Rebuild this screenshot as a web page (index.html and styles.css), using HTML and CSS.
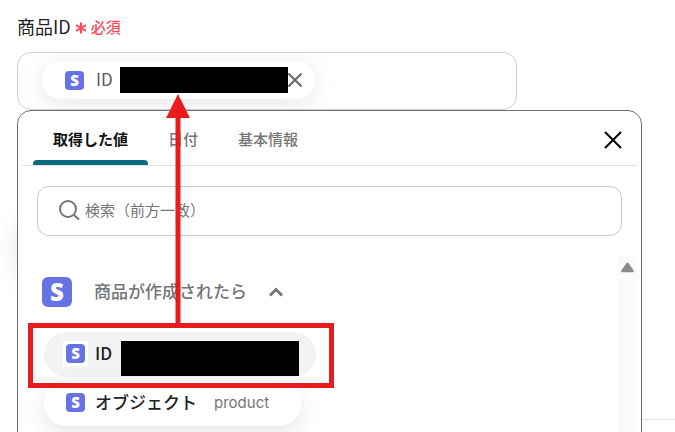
FILE: index.html
```
<!DOCTYPE html>
<html lang="ja">
<head>
  <meta charset="UTF-8">
  <title>商品ID</title>
  <meta name="viewport" content="width=device-width, initial-scale=1.0">
  <link rel="stylesheet" href="styles.css">
</head>
<body>
  <section class="form-section">
    <div class="label-row">
      <span class="label" id="product-label">商品ID</span>
      <svg class="asterisk" viewBox="0 0 12 12"><path d="M6 0.5v11M1 3.2l10 5.6M11 3.2L1 8.8"/></svg>
      <span class="required">必須</span>
    </div>

    <div class="picker">
      <div class="field" role="group" aria-labelledby="product-label">
        <div class="chip">
          <span class="logo">S</span>
          <span class="chip-name">ID</span>
          <span class="mask"></span>
          <button class="chip-remove" type="button" aria-label="削除">
            <svg viewBox="0 0 14 14"><path d="M0.5 0.5l13 13M13.5 0.5l-13 13"/></svg>
          </button>
        </div>
      </div>

      <!-- Value picker panel -->
      <div class="panel">
        <div class="tabs">
          <button class="tab active" type="button">取得した値</button>
          <button class="tab" type="button">日付</button>
          <button class="tab" type="button">基本情報</button>
          <button class="panel-close" type="button" aria-label="閉じる">
            <svg viewBox="0 0 18 18"><path d="M1 1l16 16M17 1L1 17"/></svg>
          </button>
        </div>

        <label class="search">
          <svg viewBox="0 0 22 22"><circle cx="10" cy="10" r="8"/><path d="M16 16l5 4.5"/></svg>
          <input type="text" placeholder="検索（前方一致）" aria-label="検索">
        </label>

        <div class="results">
          <div class="list">
            <button class="group" type="button">
              <span class="logo large">S</span>
              <span class="group-name">商品が作成されたら</span>
              <svg class="chevron" viewBox="0 0 14 10"><path d="M1 8.5l6-6 6 6"/></svg>
            </button>

            <div class="option-row">
              <button class="option selected" type="button">
                <span class="frame"><span class="logo">S</span></span>
                <span class="option-name">ID</span>
                <span class="mask tall"></span>
              </button>
              <!-- Callout: frame and arrow up to the field -->
              <div class="callout">
                <svg viewBox="0 0 24 234"><path d="M12 0l12 24H0z"/><path d="M9.5 22h5v212h-5z"/></svg>
              </div>
            </div>
            <div class="option-row">
              <button class="option" type="button">
                <span class="logo">S</span>
                <span class="option-name">オブジェクト</span>
                <span class="option-value">product</span>
              </button>
            </div>
          </div>
          <div class="scroll-track">
            <svg viewBox="0 0 14 10"><path d="M7 1.5l5 7H2z"/></svg>
          </div>
        </div>
      </div>
    </div>
  </section>
</body>
</html>
```
FILE: styles.css
```
* {
  box-sizing: border-box;
}
body {
  margin: 0;
  height: 100vh;
  overflow: hidden;
  background: #fff;
  color: #222;
  font-family: 'Noto Sans CJK JP', sans-serif;
  font-size: 15px;
}
button {
  margin: 0;
  padding: 0;
  border: 0;
  background: none;
  color: inherit;
  font: inherit;
  cursor: pointer;
}
svg {
  display: block;
  fill: none;
  stroke: currentColor;
  stroke-width: 2;
  flex: none;
}

.form-section {
  min-height: 420px;
  margin-left: 17px;
  padding: 14px 33px 0 0;
  border-bottom: 1px solid #e0e0e0;
}
.label-row {
  display: flex;
  align-items: center;
  gap: 4px;
  height: 24px;
  margin-bottom: 14px;
}
.label {
  font-size: 18px;
}
.asterisk {
  width: 12px;
  height: 12px;
  margin-top: 4px;
  color: #ff4858;
}
.required {
  color: #ff4858;
  font-weight: 500;
}

/* Field with the chosen value */
.picker {
  position: relative;
}
.field {
  display: flex;
  align-items: center;
  width: 80%;
  height: 58px;
  padding: 0 24px 2px;
  border: 1px solid #ccd0dc;
  border-radius: 14px;
  overflow: hidden;
}
.chip {
  display: flex;
  align-items: center;
  height: 38px;
  padding: 0 13px 0 23px;
  border-radius: 19px;
  background: #fff;
  box-shadow: 0 4px 24px rgba(0,0,0,0.1);
}
.chip-name {
  margin: 0 7px 0 12px;
  padding-bottom: 3px;
  color: #555a60;
  font-size: 17px;
}
.chip-remove {
  color: #666;
}
.chip-remove svg {
  width: 14px;
  height: 14px;
}
.mask {
  width: 168px;
  height: 26px;
  background: #000;
}
.mask.tall {
  width: 178px;
  height: 35px;
  margin-top: 10px;
}

.logo {
  display: flex;
  align-items: center;
  justify-content: center;
  flex: none;
  width: 19px;
  height: 19px;
  border-radius: 4px;
  background: #6772e5;
  color: #fff;
  font-family: 'Open Sans', sans-serif;
  font-size: 15px;
  font-weight: 800;
  line-height: 1;
}
.logo.large {
  width: 30px;
  height: 30px;
  border-radius: 6px;
  font-size: 24px;
}

/* Panel */
.panel {
  position: absolute;
  top: 100%;
  left: 0;
  right: 0;
  padding: 0 4px;
  border: 1px solid #6f6f72;
  border-radius: 14px;
  background: #fff;
}
.panel::before {
  content: '';
  position: absolute;
  z-index: -1;
  top: 110px;
  left: 4px;
  width: 40px;
  height: 56px;
  border-radius: 28px;
  box-shadow: 0 0 32px rgba(0,20,10,0.16);
}
.tabs {
  display: flex;
  height: 55px;
  padding: 0 15px 0 11px;
  border-bottom: 1px solid #e0e0e0;
}
.tab {
  padding: 0 20px;
  color: #757575;
  font-weight: 500;
}
.tab.active {
  position: relative;
  color: #111;
  font-weight: 700;
}
.tab.active::after {
  content: '';
  position: absolute;
  left: 0;
  right: 0;
  bottom: 0;
  height: 5px;
  border-radius: 4px 4px 0 0;
  background: #0b6c80;
}
.panel-close {
  margin-left: auto;
  padding-top: 4px;
  color: #000;
}
.panel-close svg {
  width: 18px;
  height: 18px;
}
.search {
  display: flex;
  align-items: center;
  gap: 5px;
  height: 50px;
  margin: 20px 15px;
  padding: 0 20px 3px;
  border: 1px solid #c8c8c8;
  border-radius: 12px;
  color: #757575;
}
.search svg {
  width: 22px;
  height: 22px;
}
.search input {
  flex: 1;
  min-width: 0;
  padding: 0;
  border: 0;
  outline: 0;
  background: none;
  font: inherit;
}
.search input::placeholder {
  color: #757575;
  opacity: 1;
}

.results {
  display: flex;
  height: 220px;
}
.list {
  flex: 1;
  padding: 20px;
}
.group {
  display: flex;
  align-items: center;
  height: 32px;
  margin-bottom: 24px;
  color: #757575;
  font-size: 17px;
  font-weight: 500;
}
.group-name {
  margin: 0 22px;
  padding-bottom: 3px;
}
.chevron {
  width: 14px;
  height: 10px;
  stroke-width: 3;
}
.option-row {
  position: relative;
  display: flex;
  margin: 0 2px 4px;
}
.option {
  display: flex;
  align-items: center;
  height: 45px;
  padding: 0 32px 2px 22px;
  border-radius: 23px;
  background: #fff;
  box-shadow: 0 8px 24px rgba(0,0,0,0.1);
}
.option.selected {
  padding-left: 19px;
  padding-right: 17px;
  background: #f3f3f3;
  box-shadow: none;
}
.option.selected .option-name {
  margin-left: 7px;
  margin-right: 9px;
}
.frame {
  padding: 3px;
  background: #fff;
}
.option-name {
  margin: 0 10px;
  padding-bottom: 2px;
  font-size: 17px;
  font-weight: 500;
}
.option-value {
  margin-left: 7px;
  color: #757575;
  font-family: Inter, sans-serif;
}
.scroll-track {
  width: 19px;
  padding: 6px 2px;
  background: #fbfbfb;
}
.scroll-track svg {
  fill: #8a8a8a;
  stroke: #8a8a8a;
  stroke-linejoin: round;
}

.callout {
  position: absolute;
  z-index: 1;
  top: -9px;
  left: -16px;
  width: 306px;
  height: 65px;
  border: 5px solid #e81c1c;
  pointer-events: none;
}
.callout svg {
  position: absolute;
  bottom: 100%;
  left: 133px;
  width: 24px;
  height: 234px;
  fill: #e81c1c;
  stroke: none;
}
```
